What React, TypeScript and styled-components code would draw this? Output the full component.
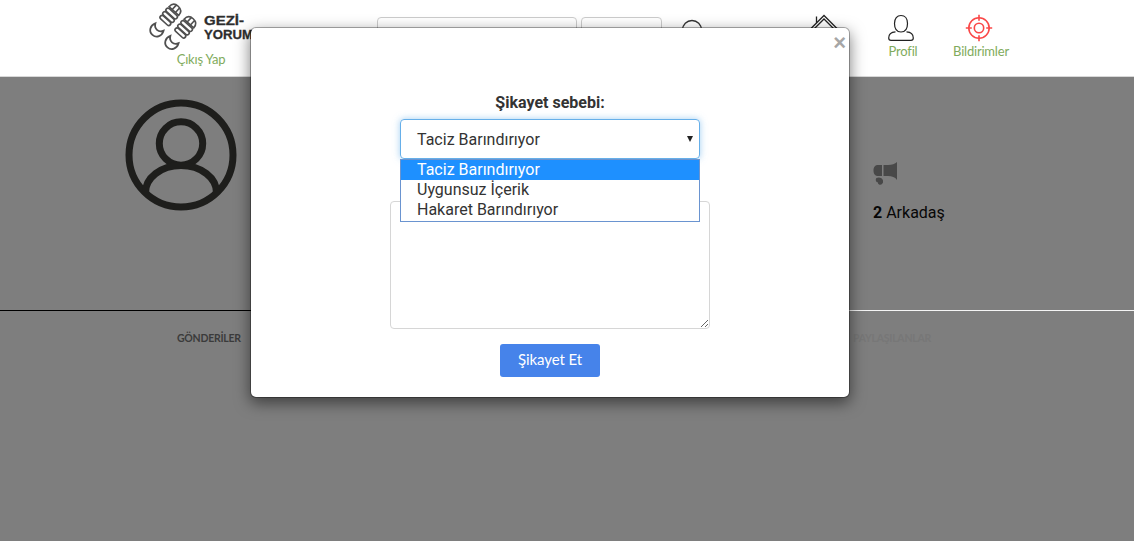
import React from 'react';
import styled, { createGlobalStyle } from 'styled-components';

const GlobalStyle = createGlobalStyle`
  * { box-sizing: border-box; }
  body { margin: 0; background: #7e7e7e; font-family: Roboto, sans-serif; color: #333; overflow: hidden; }
`;

const Page = styled.div`
  height: 541px;
  overflow: hidden;
`;

const Header = styled.header`
  display: grid;
  grid-template-columns: 229px 285px 120px 80px 78px 78px;
  padding-left: 148px;
  height: 77px;
  background: #fff;
  border-bottom: 1px solid #d8d8d8;
`;

const Brand = styled.a`
  display: flex;
  flex-direction: column;
  width: 106px;
  svg { display: block; }
`;

const LinkText = styled.span<{ $indent?: number }>`
  padding-left: ${p => p.$indent ?? 0}px;
  font: 13px/15px Lato, sans-serif;
  letter-spacing: -0.2px;
  color: #7fab5c;
  white-space: nowrap;
  text-align: center;
`;

const SearchGroup = styled.div`
  display: flex;
  gap: 4px;
  padding-top: 17px;
`;

const SearchInput = styled.input<{ $width: number }>`
  width: ${p => p.$width}px;
  height: 34px;
  border: 1px solid #ccc;
  border-radius: 4px;
  background: #fff;
`;

const IconCell = styled.div<{ $top: number; $left?: number }>`
  padding: ${p => p.$top}px 0 0 ${p => p.$left ?? 0}px;
  svg { display: block; }
`;

const NavItem = styled.a`
  display: flex;
  flex-direction: column;
  align-items: center;
  width: 78px;
  padding-top: 14px;
  svg { display: block; margin-bottom: 2px; }
`;

const ProfileArea = styled.section`
  display: flex;
  justify-content: space-between;
  height: 234px;
  padding: 22px 190px 0 125px;
  border-bottom: 1px solid;
  border-image: linear-gradient(to right, #000 50%, #f4f4f4 50%) 1;
`;

const Friends = styled.div`
  width: 72px;
  padding-top: 63px;
  margin-right: -1px;
  color: #070707;
  font-size: 16px;
  line-height: 20px;
  white-space: nowrap;
  svg { display: block; margin-bottom: 18px; }
`;

const Tabs = styled.nav`
  display: flex;
  justify-content: space-between;
  padding: 20px 203px 0 177px;
`;

const Tab = styled.a<{ $muted?: boolean }>`
  font: bold 10.5px/14px Lato, sans-serif;
  letter-spacing: -0.25px;
  color: ${p => (p.$muted ? '#777' : '#3b3b3b')};
`;

const Modal = styled.div`
  position: absolute;
  top: 27px;
  left: 250px;
  width: 600px;
  height: 371px;
  border: 1px solid rgba(0, 0, 0, 0.3);
  border-radius: 6px;
  background: #fff;
  background-clip: padding-box;
  box-shadow: 0 5px 15px rgba(0, 0, 0, 0.5);
`;

const CloseButton = styled.button`
  position: absolute;
  top: 4px;
  right: 3px;
  padding: 0;
  border: 0;
  background: none;
  color: #a6a6a6;
  font: bold 22px/22px "Liberation Sans", sans-serif;
`;

const Form = styled.form`
  display: flex;
  flex-direction: column;
  align-items: center;
  padding-top: 64px;
`;

const Label = styled.label`
  height: 27px;
  font-size: 16px;
  font-weight: 700;
  line-height: 22px;
`;

const SelectWrap = styled.div`
  position: relative;
  width: 300px;
`;

const Select = styled.div`
  display: flex;
  justify-content: space-between;
  align-items: center;
  height: 40px;
  padding: 0 6px 0 16px;
  border: 1px solid #66afe9;
  border-radius: 4px;
  box-shadow: 0 0 7px rgba(102, 175, 233, 0.6);
  font-size: 16px;
`;

const Options = styled.ul`
  position: absolute;
  top: 40px;
  left: 0;
  z-index: 1;
  width: 300px;
  height: 63px;
  margin: 0;
  padding: 0;
  border: 1px solid #6a94d0;
  background: #fff;
  list-style: none;
`;

const Option = styled.li<{ $selected?: boolean }>`
  height: 20px;
  padding-left: 16px;
  font-size: 16px;
  line-height: 19px;
  background: ${p => (p.$selected ? '#1e90ff' : '#fff')};
  color: ${p => (p.$selected ? '#fff' : '#333')};
`;

const Details = styled.textarea`
  display: block;
  width: 320px;
  height: 128px;
  margin: 42px 0 15px;
  border: 1px solid #d6d6d6;
  border-radius: 4px;
  background: #fff;
`;

const Submit = styled.button`
  width: 100px;
  height: 33px;
  padding: 0 0 2px;
  border: 0;
  border-radius: 3px;
  background: #4683ea;
  color: #fff;
  font: 15px/31px Lato, sans-serif;
  letter-spacing: -0.1px;
`;

function Footprint() {
  return (
    <g fill="none" stroke="#505050" strokeWidth="1.6">
      <path d="M-6.500-8C-6.500-12-4-14.500 0-14.500S6.500-12 6.500-8ZM-2.200-14V-8M2.200-14V-8" />
      <rect x="-7" y="-6.700" width="14" height="4" rx="2" />
      <rect x="-7" y="-2" width="14" height="4" rx="2" />
      <rect x="-6.500" y="2.700" width="13" height="4" rx="2" />
      <path d="M-5.500 13.500C-3 18.500 3 18.500 5.500 13.500C8 18.500 5.500 24 0 24S-8 18.500-5.500 13.500Z" strokeWidth="1.8" />
    </g>
  );
}

function Logo() {
  return (
    <svg width="106" height="52" viewBox="0 0 106 52">
      <g transform="translate(20.5 17) rotate(42)"><Footprint /></g>
      <g transform="translate(35.5 29.5) rotate(42)"><Footprint /></g>
      <g fill="#2d2d2d" stroke="#2d2d2d" strokeWidth=".3" fontFamily="Liberation Sans, sans-serif" fontWeight="700" fontSize="13.5">
        <text x="56" y="24.500" textLength="40" lengthAdjust="spacingAndGlyphs">GEZİ-</text>
        <text x="56" y="38.5" textLength="49" lengthAdjust="spacingAndGlyphs">YORUM</text>
      </g>
    </svg>
  );
}

function App() {
  return (
    <Page>
      <GlobalStyle />
      <Header>
        <Brand><Logo /><LinkText>Çıkış Yap</LinkText></Brand>
        <SearchGroup>
          <SearchInput $width={200} />
          <SearchInput $width={81} />
        </SearchGroup>
        <IconCell $top={18} $left={19}>
          <svg width="26" height="26" viewBox="0 0 26 26" fill="none" stroke="#333" strokeWidth="1.3"><circle cx="11" cy="12" r="9.5" /><path d="m18 18 6 6" /></svg>
        </IconCell>
        <IconCell $top={14} $left={28}>
          <svg width="28" height="28" viewBox="0 0 28 28" fill="none" stroke="#222" strokeWidth="1.3"><path d="m1 14.500 13-13 13 13M4 15 14 5l10 10M6.500 9V2.500M5 15v11h18V15" /></svg>
        </IconCell>
        <NavItem>
          <svg width="26" height="28" viewBox="0 0 26 28" fill="none" stroke="#222" strokeWidth="1.2"><path d="M13 1.500c-4 0-6.500 3-6.500 8s2 8.500 6.500 8.500 6.500-3.500 6.500-8.500-2.500-8-6.500-8ZM7.500 17.900C3 18.200.7 19.800.7 24c0 1.800.8 2.400 2.300 2.400h20c1.500 0 2.300-.6 2.300-2.400 0-4.200-2.300-5.800-6.800-6.100" /></svg>
          <LinkText $indent={4}>Profil</LinkText>
        </NavItem>
        <NavItem>
          <svg width="28" height="28" viewBox="0 0 28 28" fill="none" stroke="#fa4848" strokeWidth="1.6"><circle cx="14" cy="14" r="10.2" /><circle cx="14" cy="14" r="4.700" /><path d="M14 .8v6M14 21.200v6M.8 14h6M21.200 14h6" /></svg>
          <LinkText $indent={4}>Bildirimler</LinkText>
        </NavItem>
      </Header>
      <main>
        <ProfileArea>
          <svg width="112" height="112" viewBox="0 0 112 112" fill="none" stroke="#1e1e1c" strokeWidth="7"><circle cx="56" cy="56" r="52" /><circle cx="56" cy="44.500" r="21.700" /><path d="M20.500 94C20 79 36 66.500 56 66.500S92 79 91.500 94" /></svg>
          <Friends>
            <svg width="25" height="23" viewBox="0 0 25 23" fill="#484848"><path d="M5.500 3H9v11H5.500C2 14 .5 12 .5 8.500S2 3 5.500 3ZM10.500 3H15c4 0 7-1 9-3v18c-2-3-5-4-9-4h-4.500ZM3.500 16c2-1.300 6-.5 6.500 2.500v2c-1 2-2 2.500-4 2l-1-1v-1c-2 0-3-3-1.500-4.500Z" /></svg>
            <b>2</b> Arkadaş
          </Friends>
        </ProfileArea>
        <Tabs><Tab>GÖNDERİLER</Tab><Tab $muted>PAYLAŞILANLAR</Tab></Tabs>
      </main>
      <Modal>
        <CloseButton type="button">×</CloseButton>
        <Form>
          <Label>Şikayet sebebi:</Label>
          <SelectWrap>
            <Select>
              <span>Taciz Barındırıyor</span>
              <svg width="6" height="6" viewBox="0 0 6 6"><path d="M0 0h6L3 6Z" fill="#222" /></svg>
            </Select>
            <Options>
              <Option $selected>Taciz Barındırıyor</Option>
              <Option>Uygunsuz İçerik</Option>
              <Option>Hakaret Barındırıyor</Option>
            </Options>
          </SelectWrap>
          <Details />
          <Submit type="button">Şikayet Et</Submit>
        </Form>
      </Modal>
    </Page>
  );
}

export default App;
